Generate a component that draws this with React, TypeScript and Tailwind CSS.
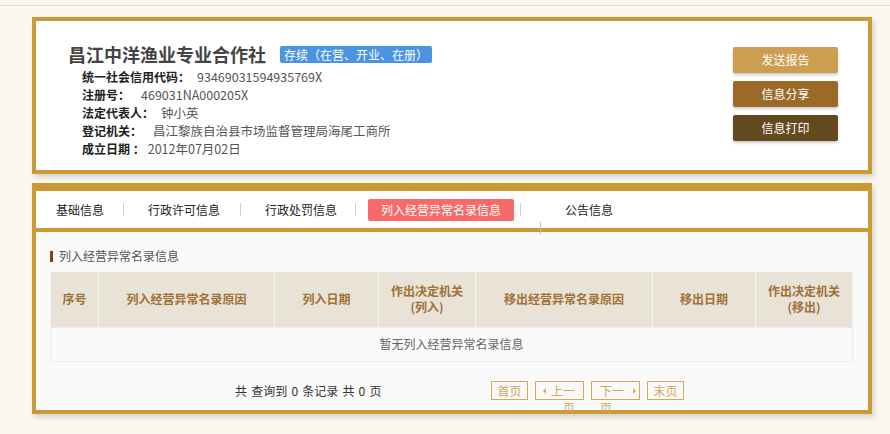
const infoRows = [
  { label: '统一社会信用代码：', value: '93469031594935769X', gap: 'ml-[7px]' },
  { label: '注册号：', value: '469031NA000205X', gap: 'ml-[11px]' },
  { label: '法定代表人：', value: '钟小英', gap: 'ml-[7px]' },
  { label: '登记机关：', value: '昌江黎族自治县市场监督管理局海尾工商所', gap: 'ml-[11px]' },
  { label: '成立日期 ：', value: '2012年07月02日', gap: 'ml-[3px]' },
];

const columns = [
  { w: 'w-[48px]', title: '序号' },
  { w: 'w-[176px]', title: '列入经营异常名录原因' },
  { w: 'w-[104px]', title: '列入日期' },
  { w: 'w-[97px]', title: '作出决定机关(列入)' },
  { w: 'w-[177px]', title: '移出经营异常名录原因' },
  { w: 'w-[103px]', title: '移出日期' },
  { w: 'w-[97px]', title: '作出决定机关(移出)' },
];

function Sep({ className }: { className: string }) {
  return <span className={`block w-px h-[13px] bg-[#cfcfcf] ${className}`} />;
}

export default function App() {
  return (
    <div className="min-h-screen bg-[#faf7f0] font-['Noto_Sans_CJK_SC','Microsoft_YaHei',sans-serif] text-[12px]">
      <div className="h-[5px]" />
      <div className="h-px bg-[#e3ded7]" />

      <div className="ml-[32px] w-[840px] mt-[11px]">
        {/* header card */}
        <div className="h-[157px] border-4 border-[#c99a36] bg-white shadow-[2px_3px_5px_rgba(0,0,0,0.15)] flex justify-between">
          <div className="pl-[32px] pt-[22px]">
            <div className="flex items-center h-[22px]">
              <h1 className="text-[18px] font-bold text-[#444] leading-none">昌江中洋渔业专业合作社</h1>
              <span className="ml-[14px] h-[17px] px-[4px] bg-[#4a94e0] text-white text-[12px] leading-[17px] rounded-[2px]">
                存续（在营、开业、在册）
              </span>
            </div>
            <div className="mt-[3px] pl-[14px]">
              {infoRows.map((r) => (
                <div key={r.label} className="h-[18px] flex items-center">
                  <span className="font-bold text-[#222]">{r.label}</span>
                  <span className={`${r.gap} text-[#555] text-[12.5px]`}>{r.value}</span>
                </div>
              ))}
            </div>
          </div>
          <div className="pt-[26px] pr-[30px] flex flex-col gap-[8px]">
            <button className="w-[105px] h-[26px] rounded-[2px] bg-[#cc9e50] text-white text-[12px] shadow-[0_2px_3px_rgba(0,0,0,0.2)]">发送报告</button>
            <button className="w-[105px] h-[26px] rounded-[2px] bg-[#9b6a29] text-white text-[12px] shadow-[0_2px_3px_rgba(0,0,0,0.2)]">信息分享</button>
            <button className="w-[105px] h-[26px] rounded-[2px] bg-[#624a1e] text-white text-[12px] shadow-[0_2px_3px_rgba(0,0,0,0.2)]">信息打印</button>
          </div>
        </div>

        {/* detail card */}
        <div className="mt-[9px] h-[231px] border-4 border-t-8 border-[#c99a36] bg-[#fafafa] shadow-[2px_3px_5px_rgba(0,0,0,0.15)] relative flex flex-col">
          <div className="h-[37px] bg-white flex items-center pl-[20px] text-[#222]">
            <span>基础信息</span>
            <Sep className="ml-[19px]" />
            <span className="ml-[24px]">行政许可信息</span>
            <Sep className="ml-[20px]" />
            <span className="ml-[24px]">行政处罚信息</span>
            <Sep className="ml-[18px]" />
            <span className="ml-[12px] h-[22px] px-[13px] leading-[22px] bg-[#f76a6a] text-white rounded-[2px]">列入经营异常名录信息</span>
            <Sep className="ml-[6px]" />
            <span className="ml-[44px]">公告信息</span>
          </div>
          <div className="h-[4px] bg-[#c99a36]" />
          <span className="absolute left-[504px] top-[31px] w-px h-[12px] bg-[#bdbdbd]" />

          <div className="flex-1 pt-[16px] pl-[14px] pr-[16px]">
            <div className="flex items-center h-[16px]">
              <span className="w-[3px] h-[11px] bg-[#7a4512]" />
              <span className="ml-[6px] text-[#555]">列入经营异常名录信息</span>
            </div>
            <table className="mt-[8px] w-[802px] border-collapse table-fixed">
              <thead>
                <tr className="h-[55px] bg-[#e9e2d7]">
                  {columns.map((c) => (
                    <th
                      key={c.title}
                      className={`${c.w} border-x border-[#f6f3ee] text-[#9e7134] font-bold text-[12px] leading-[16px] px-[10px]`}
                    >
                      {c.title}
                    </th>
                  ))}
                </tr>
              </thead>
              <tbody>
                <tr className="h-[34px]">
                  <td colSpan={7} className="border border-[#ececec] text-center text-[#666]">
                    暂无列入经营异常名录信息
                  </td>
                </tr>
              </tbody>
            </table>

            <div className="mt-[19px] flex items-start">
              <span className="ml-[185px] w-[256px] h-[19px] leading-[19px] text-[#333] [word-spacing:1.5px]">共 查询到 0 条记录 共 0 页</span>
              <div className="flex gap-[7px] text-[#d3a55a]">
                <span className="w-[37px] h-[19px] border border-[#d8a85a] leading-[17px] text-center">首页</span>
                <span className="relative w-[49px] h-[19px] border border-[#d8a85a]">
                  <span className="absolute left-[7px] top-[6px] w-0 h-0 border-y-[3px] border-y-transparent border-r-[3px] border-r-[#d8a85a]" />
                  <span className="absolute left-[15px] top-0 w-[24px] leading-[17.5px] text-right">上一页</span>
                </span>
                <span className="relative w-[49px] h-[19px] border border-[#d8a85a]">
                  <span className="absolute left-[8px] top-0 w-[24px] leading-[17.5px] text-left">下一页</span>
                  <span className="absolute left-[41px] top-[6px] w-0 h-0 border-y-[3px] border-y-transparent border-l-[3px] border-l-[#d8a85a]" />
                </span>
                <span className="w-[37px] h-[19px] border border-[#d8a85a] leading-[17px] text-center">末页</span>
              </div>
            </div>
          </div>
        </div>
      </div>
    </div>
  );
}
